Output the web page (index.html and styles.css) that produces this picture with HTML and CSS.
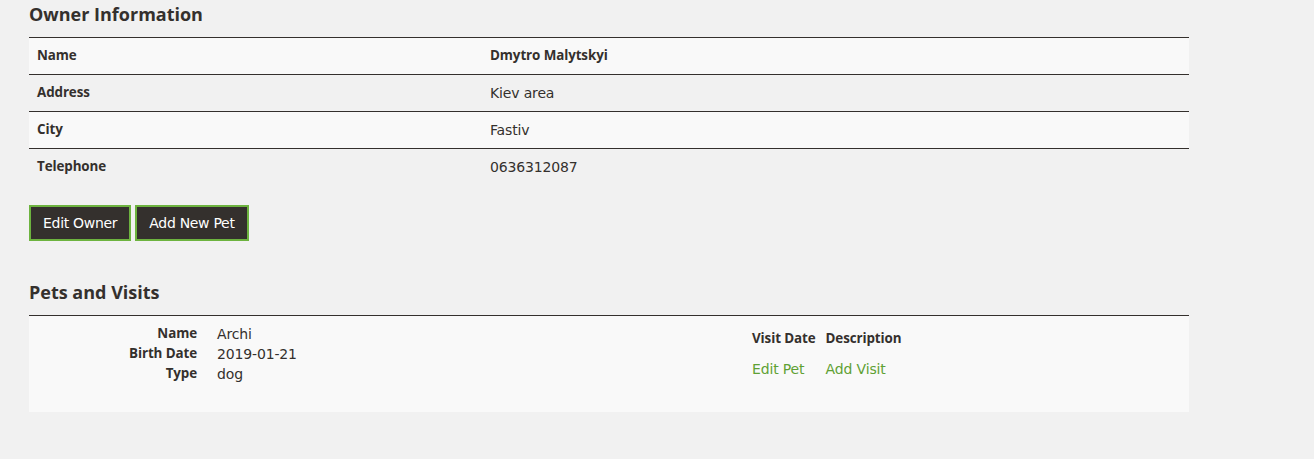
FILE: index.html
```html
<!DOCTYPE html>
<html>
<head>
<meta charset="utf-8">
<title>Owner Information</title>
<link rel="stylesheet" href="styles.css">
</head>
<body>
<div class="container">
  <h2 class="heading">Owner Information</h2>
  <table class="owner-table">
    <tr class="odd"><th>Name</th><td><b>Dmytro Malytskyi</b></td></tr>
    <tr><th>Address</th><td>Kiev area</td></tr>
    <tr class="odd"><th>City</th><td>Fastiv</td></tr>
    <tr><th>Telephone</th><td>0636312087</td></tr>
  </table>
  <div class="actions">
    <a class="btn" href="#">Edit Owner</a>
    <a class="btn" href="#">Add New Pet</a>
  </div>
  <h2 class="heading heading-pets">Pets and Visits</h2>
  <table class="pets-table">
    <tr>
      <td class="pet-cell">
        <dl class="pet-info">
          <dt>Name</dt><dd>Archi</dd>
          <dt>Birth Date</dt><dd>2019-01-21</dd>
          <dt>Type</dt><dd>dog</dd>
        </dl>
      </td>
      <td class="visit-cell">
        <table class="visits">
          <thead><tr><th>Visit Date</th><th>Description</th></tr></thead>
          <tbody><tr><td><a href="#">Edit Pet</a></td><td><a href="#">Add Visit</a></td></tr></tbody>
        </table>
      </td>
    </tr>
  </table>
</div>
</body>
</html>
```
FILE: styles.css
```css
html, body {
  margin: 0;
  padding: 0;
  background: #f1f1f1;
}
body {
  font-family: "DejaVu Sans", "Open Sans", sans-serif;
  font-size: 14px;
  line-height: 20px;
  letter-spacing: -0.15px;
  color: #34302d;
}
.container {
  width: 1160px;
  padding-left: 29px;
}
.heading {
  font-family: "Open Sans", sans-serif;
  font-weight: bold;
  font-size: 18px;
  line-height: 20px;
  letter-spacing: 0;
  margin: 4px 0 13px 0;
  color: #34302d;
}
.heading-pets {
  margin-top: 41px;
}
.owner-table {
  width: 100%;
  border-collapse: collapse;
  border-spacing: 0;
}
.owner-table th,
.owner-table td {
  border-top: 1px solid #34302d;
  padding: 8px;
  text-align: left;
  vertical-align: top;
  height: 20px;
  box-sizing: content-box;
}
.owner-table th {
  width: 437px;
}
.owner-table th,
.owner-table b,
.pet-info dt,
.visits th {
  font-family: "Open Sans", sans-serif;
  font-weight: bold;
  font-size: 13.4px;
  letter-spacing: -0.1px;
}
.owner-table th,
.pet-info dt,
.visits th {
  line-height: 18px;
}
.owner-table b {
  display: inline-block;
  line-height: 18px;
  vertical-align: top;
}
.owner-table tr.odd {
  background: #f9f9f9;
}
.actions {
  display: flex;
  gap: 4px;
  margin-top: 20px;
}
.btn {
  display: inline-block;
  background: #34302d;
  border: 2px solid #6db33f;
  color: #fff;
  padding: 6px 12px;
  text-decoration: none;
  font-size: 14px;
  line-height: 20px;
  letter-spacing: -0.3px;
}
.pets-table {
  width: 100%;
  border-collapse: collapse;
  border-spacing: 0;
  background: #f9f9f9;
}
.pets-table > tbody > tr > td {
  border-top: 1px solid #34302d;
  padding: 8px;
  vertical-align: top;
}
.pet-cell {
  width: 694px;
}
.pet-info {
  display: grid;
  grid-template-columns: 160px 1fr;
  column-gap: 20px;
  margin: 0 0 20px 0;
}
.pet-info dt {
  text-align: right;
}
.pet-info dd {
  margin: 0;
}
.visits {
  border-collapse: collapse;
  border-spacing: 0;
}
.visits th,
.visits td {
  padding: 5px;
  text-align: left;
  vertical-align: top;
}
.visits th {
  padding-bottom: 7px;
}
.visits a {
  color: #5fa134;
  text-decoration: none;
}
```
